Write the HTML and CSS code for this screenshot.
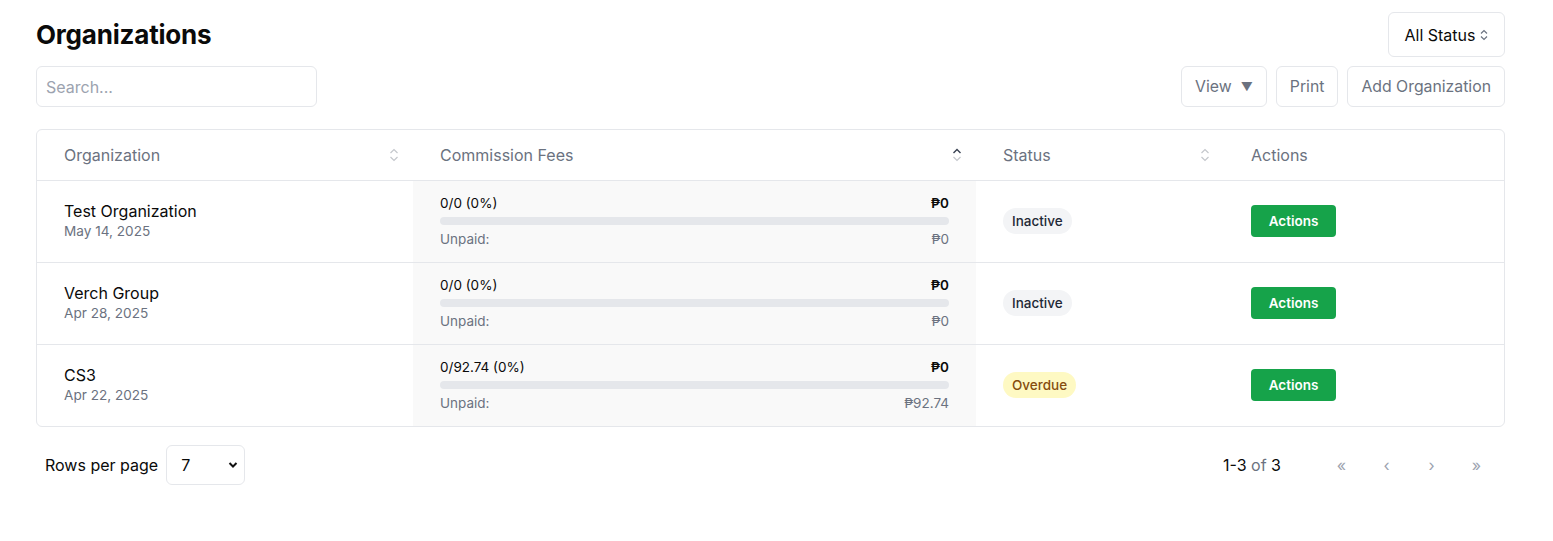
FILE: index.html
```html
<!DOCTYPE html>
<html>
<head>
<meta charset="utf-8">
<link rel="stylesheet" href="styles.css">
</head>
<body>
<div class="page">
  <div class="top">
    <h1 class="title">Organizations</h1>
    <button class="btn btn-status">All Status
      <svg class="updown" width="10" height="14" viewBox="0 0 10 14"><path d="M2 5.5 L5 2.5 L8 5.5" fill="none" stroke="#6b7280" stroke-width="1.2"/><path d="M2 8.5 L5 11.5 L8 8.5" fill="none" stroke="#6b7280" stroke-width="1.2"/></svg>
    </button>
  </div>
  <div class="toolbar">
    <input class="search" type="text" placeholder="Search...">
    <div class="tools">
      <button class="btn btn-tool">View <span class="tri">▼</span></button>
      <button class="btn btn-tool">Print</button>
      <button class="btn btn-tool">Add Organization</button>
    </div>
  </div>
  <div class="table-wrap">
    <table class="table">
      <colgroup>
        <col class="c1"><col class="c2"><col class="c3"><col class="c4">
      </colgroup>
      <thead>
        <tr>
          <th><div class="th">Organization
            <svg class="sort" width="10" height="16" viewBox="0 0 10 16"><path d="M1.5 6 L5 2.5 L8.5 6" fill="none" stroke="#c4c7cc" stroke-width="1.2"/><path d="M1.5 10 L5 13.5 L8.5 10" fill="none" stroke="#c4c7cc" stroke-width="1.2"/></svg></div></th>
          <th><div class="th">Commission Fees
            <svg class="sort" width="10" height="16" viewBox="0 0 10 16"><path d="M1.5 6 L5 2.5 L8.5 6" fill="none" stroke="#374151" stroke-width="1.4"/><path d="M1.5 10 L5 13.5 L8.5 10" fill="none" stroke="#c4c7cc" stroke-width="1.2"/></svg></div></th>
          <th><div class="th">Status
            <svg class="sort" width="10" height="16" viewBox="0 0 10 16"><path d="M1.5 6 L5 2.5 L8.5 6" fill="none" stroke="#c4c7cc" stroke-width="1.2"/><path d="M1.5 10 L5 13.5 L8.5 10" fill="none" stroke="#c4c7cc" stroke-width="1.2"/></svg></div></th>
          <th><div class="th">Actions</div></th>
        </tr>
      </thead>
      <tbody>
        <tr>
          <td><div class="name">Test Organization</div><div class="date">May 14, 2025</div></td>
          <td class="fees">
            <div class="fee-line"><span>0/0 (0%)</span><span class="amt">₱0</span></div>
            <div class="bar"><div class="bar-fill" style="width:0%"></div></div>
            <div class="fee-line unpaid"><span>Unpaid:</span><span>₱0</span></div>
          </td>
          <td><span class="badge inactive">Inactive</span></td>
          <td><button class="act">Actions</button></td>
        </tr>
        <tr>
          <td><div class="name">Verch Group</div><div class="date">Apr 28, 2025</div></td>
          <td class="fees">
            <div class="fee-line"><span>0/0 (0%)</span><span class="amt">₱0</span></div>
            <div class="bar"><div class="bar-fill" style="width:0%"></div></div>
            <div class="fee-line unpaid"><span>Unpaid:</span><span>₱0</span></div>
          </td>
          <td><span class="badge inactive">Inactive</span></td>
          <td><button class="act">Actions</button></td>
        </tr>
        <tr>
          <td><div class="name">CS3</div><div class="date">Apr 22, 2025</div></td>
          <td class="fees">
            <div class="fee-line"><span>0/92.74 (0%)</span><span class="amt">₱0</span></div>
            <div class="bar"><div class="bar-fill" style="width:0%"></div></div>
            <div class="fee-line unpaid"><span>Unpaid:</span><span>₱92.74</span></div>
          </td>
          <td><span class="badge overdue">Overdue</span></td>
          <td><button class="act">Actions</button></td>
        </tr>
      </tbody>
    </table>
  </div>
  <div class="pager">
    <div class="rows">
      <span>Rows per page</span>
      <div class="select"><span>7</span>
        <svg width="10" height="8" viewBox="0 0 10 8"><path d="M1.5 2 L5 5.5 L8.5 2" fill="none" stroke="#111" stroke-width="2"/></svg>
      </div>
    </div>
    <div class="nav">
      <span class="count">1-3 <span class="of">of</span> 3</span>
      <div class="navbtns">
        <span class="nb">«</span><span class="nb">‹</span><span class="nb">›</span><span class="nb">»</span>
      </div>
    </div>
  </div>
</div>
</body>
</html>
```
FILE: styles.css
```css
* { box-sizing: border-box; }
body {
  margin: 0;
  font-family: Inter, "Noto Sans", sans-serif;
  color: #111827;
  background: #fff;
}
.page {
  padding: 12px 48px 0 36px;
}
.top {
  display: flex;
  justify-content: space-between;
  align-items: center;
  height: 45px;
}
.title {
  margin: 0;
  font-size: 26px;
  font-weight: 700;
  color: #0a0a0a;
  letter-spacing: -0.2px;
}
.btn {
  font-family: inherit;
  background: #fff;
  border: 1px solid #e5e7eb;
  border-radius: 6px;
  cursor: pointer;
}
.btn-status {
  height: 45px;
  width: 117px;
  font-size: 16px;
  color: #0a0a0a;
  display: flex;
  align-items: center;
  justify-content: center;
  gap: 3px;
  padding: 0 10px;
}
.toolbar {
  margin-top: 9px;
  display: flex;
  justify-content: space-between;
  align-items: center;
}
.search {
  width: 281px;
  height: 41px;
  border: 1px solid #e5e7eb;
  border-radius: 6px;
  padding: 0 9px;
  font-family: inherit;
  font-size: 16px;
  outline: none;
}
.search::placeholder { color: #9ca3af; }
.tools {
  display: flex;
  gap: 9px;
}
.btn-tool {
  height: 41px;
  padding: 0 13px;
  font-size: 15.8px;
  color: #6b7280;
  display: flex;
  align-items: center;
}
.tri {
  font-size: 12px;
  margin-left: 9px;
  color: #6b7280;
}
.table-wrap {
  margin-top: 22px;
  border: 1px solid #e5e7eb;
  border-radius: 6px;
  overflow: hidden;
}
.table {
  width: 100%;
  border-collapse: collapse;
  table-layout: fixed;
}
.c1 { width: 376px; }
.c2 { width: 563px; }
.c3 { width: 248px; }
.c4 { width: auto; }
th {
  height: 50px;
  text-align: left;
  font-weight: 400;
  font-size: 16px;
  color: #6b7280;
  padding: 0 14px 0 27px;
  border-bottom: 1px solid #e5e7eb;
}
.th {
  display: flex;
  justify-content: space-between;
  align-items: center;
}
.sort { display: block; }
td {
  height: 82px;
  padding: 0 27px;
  vertical-align: middle;
  border-bottom: 1px solid #e5e7eb;
}
tbody tr:last-child td { border-bottom: none; height: 82px; }
.name {
  font-size: 16px;
  color: #0a0a0a;
  line-height: 21px;
}
.date {
  font-size: 13.6px;
  color: #6b7280;
  line-height: 19px;
}
.fees {
  background: #f9f9f9;
  padding: 0 27px 0 27px;
}
.fee-line {
  display: flex;
  justify-content: space-between;
  font-size: 13.5px;
  line-height: 16px;
  color: #0a0a0a;
}
.amt { font-weight: 600; }
.bar {
  margin: 6px 0 6px;
  height: 8px;
  border-radius: 4px;
  background: #e5e7eb;
  overflow: hidden;
}
.bar-fill { height: 100%; background: #16a34a; }
.unpaid { color: #6b7280; }
.badge {
  display: inline-block;
  font-size: 13.5px;
  font-weight: 500;
  line-height: 26px;
  height: 26px;
  padding: 0 9px;
  border-radius: 13px;
}
.inactive { background: #f3f4f6; color: #1f2937; }
.overdue { background: #fef9c3; color: #854d0e; }
.act {
  font-family: inherit;
  background: #16a34a;
  color: #fff;
  border: none;
  border-radius: 4px;
  height: 32px;
  width: 85px;
  font-size: 13.5px;
  font-weight: 600;
  cursor: pointer;
}
.pager {
  margin-top: 18px;
  display: flex;
  justify-content: space-between;
  align-items: center;
  height: 40px;
}
.rows {
  display: flex;
  align-items: center;
  gap: 8px;
  padding-left: 9px;
  font-size: 16px;
  color: #0a0a0a;
}
.select {
  width: 79px;
  height: 40px;
  border: 1px solid #e5e7eb;
  border-radius: 6px;
  display: flex;
  align-items: center;
  justify-content: space-between;
  padding: 0 6px 0 14px;
  font-size: 16px;
}
.nav {
  display: flex;
  align-items: center;
  padding-right: 6px;
}
.count {
  font-size: 16px;
  color: #0a0a0a;
  margin-right: 38px;
}
.of { color: #6b7280; }
.navbtns {
  display: flex;
}
.nb {
  width: 45px;
  text-align: center;
  color: #9ca3af;
  font-size: 16px;
}
```
